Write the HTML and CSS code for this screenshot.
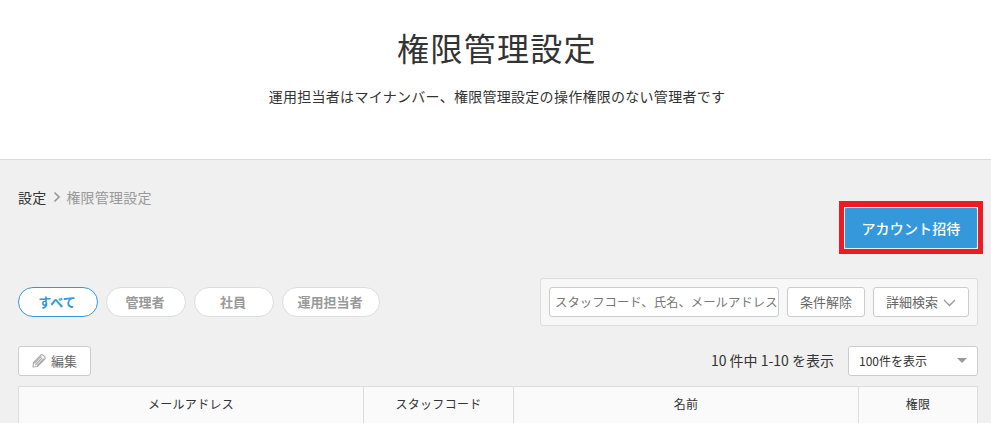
FILE: index.html
```html
<!DOCTYPE html>
<html lang="ja">
<head>
<meta charset="UTF-8">
<meta name="viewport" content="width=device-width, initial-scale=1.0">
<title>権限管理設定</title>
<link rel="stylesheet" href="styles.css">
</head>
<body>
<div class="header">
    <h1>権限管理設定</h1>
    <p>運用担当者はマイナンバー、権限管理設定の操作権限のない管理者です</p>
</div>
<div class="main">
    <div class="toprow">
        <div class="breadcrumb">
            <span class="crumb">設定</span>
            <svg class="crumbarrow" width="8" height="12" viewBox="0 0 8 12"><path d="M1.5 1.5 L6 6 L1.5 10.5" fill="none" stroke="#999" stroke-width="1.7"/></svg>
            <span class="current">権限管理設定</span>
        </div>
        <div class="highlight">
            <button class="invite">アカウント招待</button>
        </div>
    </div>
    <div class="filterrow">
        <div class="pills">
            <button class="pill active">すべて</button>
            <button class="pill">管理者</button>
            <button class="pill">社員</button>
            <button class="pill wide">運用担当者</button>
        </div>
        <div class="searchbox">
            <input class="searchinput" type="text" placeholder="スタッフコード、氏名、メールアドレス">
            <button class="btn clear">条件解除</button>
            <button class="btn detail">詳細検索
                <svg class="chevron" width="13" height="8" viewBox="0 0 13 8"><path d="M1 1 L6.5 6.5 L12 1" fill="none" stroke="#999" stroke-width="1.3"/></svg>
            </button>
        </div>
    </div>
    <div class="listrow">
        <button class="btn edit">
            <svg width="14" height="15" viewBox="0 0 14 15"><path d="M1 14 L1.5 9.5 L8.8 2.2 A1.6 1.6 0 0 1 11 2.2 L12.8 4 A1.6 1.6 0 0 1 12.8 6.2 L5.5 13.5 Z M3.2 12 L10.3 4.9 M5 12.6 L12 5.6 M2.4 10.4 L9.4 3.4" fill="none" stroke="#aaa" stroke-width="1.1"/></svg>
            編集
        </button>
        <div class="listright">
            <span class="count">10 件中 1-10 を表示</span>
            <div class="select">100件を表示<span class="caret"></span></div>
        </div>
    </div>
    <table class="table">
        <tr>
            <th class="mail">メールアドレス</th>
            <th class="code">スタッフコード</th>
            <th>名前</th>
            <th class="role">権限</th>
        </tr>
    </table>
</div>
</body>
</html>
```
FILE: styles.css
```css
html, body {
    height: 100%;
}
body {
    margin: 0;
    background-color: #f0f0f0;
    font-family: "Noto Sans CJK JP", "Noto Sans", sans-serif;
    color: #333;
    overflow: hidden;
}
button {
    font-family: inherit;
    cursor: pointer;
}
.header {
    height: 159px;
    padding-left: 3px;
    background-color: #fff;
    border-bottom: 1px solid #d9d9d9;
    text-align: center;
    overflow: hidden;
}
.header h1 {
    margin: 24px 0 0;
    font-size: 32px;
    line-height: 46px;
    font-weight: 400;
    letter-spacing: 1.3px;
}
.header p {
    margin: 16px 0 0;
    font-size: 14px;
    line-height: 20px;
    letter-spacing: 0.28px;
}
.main {
    padding: 0 8px 0 18px;
}
.toprow {
    display: flex;
    justify-content: space-between;
    align-items: flex-start;
    height: 118px;
}
.breadcrumb {
    display: flex;
    align-items: center;
    gap: 6px;
    margin-top: 27px;
    font-size: 14px;
    line-height: 20px;
    letter-spacing: 0.2px;
}
.crumbarrow {
    margin: 0 -1px 0 1px;
}
.current {
    color: #999;
}
.highlight {
    margin-top: 41px;
    border: 5px solid #ed1c24;
    border-top-width: 6px;
    display: flex;
}
.invite {
    width: 134px;
    height: 42px;
    padding: 0;
    background-color: #3498db;
    border: 1px solid #e6f2fa;
    border-radius: 2px;
    color: #fff;
    font-size: 14px;
    font-weight: 500;
    letter-spacing: 0.15px;
}
.filterrow {
    display: flex;
    justify-content: space-between;
    align-items: center;
    margin-right: 5px;
}
.pills {
    display: flex;
    gap: 8px;
}
.pill {
    width: 80px;
    height: 30px;
    padding: 0 2px 2px 0;
    background-color: #fff;
    border: 1px solid #ddd;
    border-radius: 15px;
    color: #999;
    font-size: 13px;
    font-weight: 700;
}
.pill.wide {
    width: 98px;
}
.pill.active {
    border-color: #3498db;
    color: #3498db;
}
.searchbox {
    display: flex;
    gap: 8px;
    width: 420px;
    padding: 8px;
    background-color: #f7f7f7;
    border: 1px solid #ddd;
    border-radius: 3px;
}
.searchinput {
    width: 230px;
    height: 30px;
    box-sizing: border-box;
    padding: 0 0 0 5px;
    background-color: #fff;
    border: 1px solid #ccc;
    border-radius: 3px;
    font-family: inherit;
    font-size: 12.4px;
}
.searchinput::placeholder {
    color: #777;
    opacity: 1;
}
.btn {
    height: 30px;
    padding: 0 0 1px;
    background-color: #fff;
    border: 1px solid #ccc;
    border-radius: 3px;
    color: #666;
    font-size: 13px;
    display: flex;
    align-items: center;
    justify-content: center;
}
.clear {
    width: 78px;
}
.detail {
    width: 96px;
    gap: 5px;
}
.chevron {
    margin-top: 3px;
}
.edit {
    width: 73px;
    gap: 5px;
}
.listrow {
    display: flex;
    justify-content: space-between;
    align-items: center;
    margin-top: 20px;
    margin-right: 5px;
}
.listright {
    display: flex;
    align-items: center;
    gap: 14px;
}
.count {
    font-size: 14px;
    padding-bottom: 2px;
}
.select {
    position: relative;
    width: 130px;
    height: 30px;
    box-sizing: border-box;
    padding-left: 10px;
    background-color: #fff;
    border: 1px solid #ccc;
    border-radius: 3px;
    font-size: 12px;
    line-height: 28px;
}
.caret {
    position: absolute;
    right: 10px;
    top: 11px;
    border-left: 5px solid transparent;
    border-right: 5px solid transparent;
    border-top: 5px solid #999;
}
.table {
    width: 960px;
    margin-top: 10px;
    border-collapse: collapse;
    table-layout: fixed;
}
.table th {
    height: 36px;
    padding: 8px 0 0;
    background-color: #fafafa;
    border: 1px solid #ddd;
    font-size: 12px;
    font-weight: 400;
    letter-spacing: 0.3px;
    text-align: center;
    vertical-align: top;
}
.mail {
    width: 344px;
}
.code {
    width: 149px;
}
.role {
    width: 118px;
}
```
